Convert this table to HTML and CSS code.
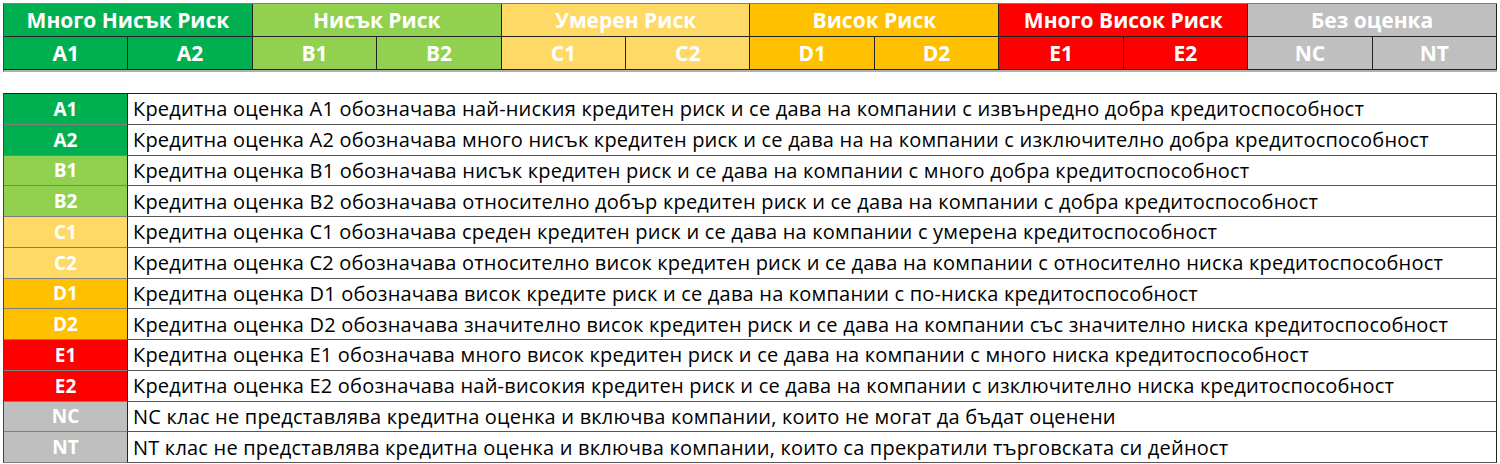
FILE: index.html
```html
<!DOCTYPE html>
<html lang="bg">
<head>
<meta charset="utf-8">
<link rel="stylesheet" href="styles.css">
</head>
<body>
<div class="page">
  <div class="scale">
    <div class="grp g-a">Много Нисък Риск</div>
    <div class="grp g-b">Нисък Риск</div>
    <div class="grp g-c">Умерен Риск</div>
    <div class="grp g-d">Висок Риск</div>
    <div class="grp g-e">Много Висок Риск</div>
    <div class="grp g-n">Без оценка</div>
    <div class="sub g-a">A1</div>
    <div class="sub g-a">A2</div>
    <div class="sub g-b">B1</div>
    <div class="sub g-b">B2</div>
    <div class="sub g-c">C1</div>
    <div class="sub g-c">C2</div>
    <div class="sub g-d">D1</div>
    <div class="sub g-d">D2</div>
    <div class="sub g-e">E1</div>
    <div class="sub g-e">E2</div>
    <div class="sub g-n">NC</div>
    <div class="sub g-n">NT</div>
  </div>

  <div class="legend">
    <div class="code g-a">A1</div><div class="desc">Кредитна оценка A1 обозначава най-ниския кредитен риск и се дава на компании с извънредно добра кредитоспособност</div>
    <div class="code g-a">A2</div><div class="desc">Кредитна оценка A2 обозначава много нисък кредитен риск и се дава на на компании с изключително добра кредитоспособност</div>
    <div class="code g-b">B1</div><div class="desc">Кредитна оценка B1 обозначава нисък кредитен риск и се дава на компании с много добра кредитоспособност</div>
    <div class="code g-b">B2</div><div class="desc">Кредитна оценка B2 обозначава относително добър кредитен риск и се дава на компании с добра кредитоспособност</div>
    <div class="code g-c">C1</div><div class="desc">Кредитна оценка C1 обозначава среден кредитен риск и се дава на компании с умерена кредитоспособност</div>
    <div class="code g-c">C2</div><div class="desc">Кредитна оценка C2 обозначава относително висок кредитен риск и се дава на компании с относително ниска кредитоспособност</div>
    <div class="code g-d">D1</div><div class="desc">Кредитна оценка D1 обозначава висок кредите риск и се дава на компании с по-ниска кредитоспособност</div>
    <div class="code g-d">D2</div><div class="desc">Кредитна оценка D2 обозначава значително висок кредитен риск и се дава на компании със значително ниска кредитоспособност</div>
    <div class="code g-e">E1</div><div class="desc">Кредитна оценка E1 обозначава много висок кредитен риск и се дава на компании с много ниска кредитоспособност</div>
    <div class="code g-e">E2</div><div class="desc">Кредитна оценка E2 обозначава най-високия кредитен риск и се дава на компании с изключително ниска кредитоспособност</div>
    <div class="code g-n">NC</div><div class="desc">NC клас не представлява кредитна оценка и включва компании, които не могат да бъдат оценени</div>
    <div class="code g-n">NT</div><div class="desc">NT клас не представлява кредитна оценка и включва компании, които са прекратили търговската си дейност</div>
  </div>
</div>
</body>
</html>
```

FILE: styles.css
```css
html, body {
  margin: 0;
  padding: 0;
  background: #ffffff;
}

.page {
  padding: 3px 3px 0 3px;
  font-family: "Open Sans", "Noto Sans", "DejaVu Sans", sans-serif;
}

.scale {
  display: grid;
  grid-template-columns: repeat(12, 1fr);
  grid-template-rows: 33px 33px;
  width: 1494px;
  border-top: 1px solid #7f7f7f;
  border-left: 1px solid #444;
  box-sizing: border-box;
  border-bottom: 2px solid #b0b0b0;
}

.grp, .sub {
  display: flex;
  align-items: center;
  justify-content: center;
  color: #ffffff;
  font-weight: 700;
  font-size: 21px;
  border-right: 1px solid #222;
  border-bottom: 1px solid #222;
  box-sizing: border-box;
}

.grp { grid-column: span 2; }

.g-a { background: #00b050; }
.g-b { background: #92d050; }
.g-c { background: #ffd966; }
.g-d { background: #ffc000; }
.g-e { background: #ff0000; }
.g-n { background: #bfbfbf; }

.legend {
  margin-top: 21px;
  width: 1494px;
  display: grid;
  grid-template-columns: 124px 1fr;
  grid-template-rows: repeat(12, 30.75px);
  border-top: 1px solid #222;
  border-left: 1px solid #444;
  box-sizing: border-box;
}

.code {
  display: flex;
  align-items: center;
  justify-content: center;
  color: #ffffff;
  font-weight: 700;
  font-size: 19px;
  border-right: 1px solid #222;
  border-bottom: 1px solid #7f7f7f;
  box-sizing: border-box;
}

.desc {
  display: flex;
  align-items: center;
  padding-left: 5px;
  font-size: 20px;
  color: #000000;
  border-right: 1px solid #222;
  border-bottom: 1px solid #555;
  box-sizing: border-box;
  white-space: nowrap;
  letter-spacing: 0.2px;
}
```
